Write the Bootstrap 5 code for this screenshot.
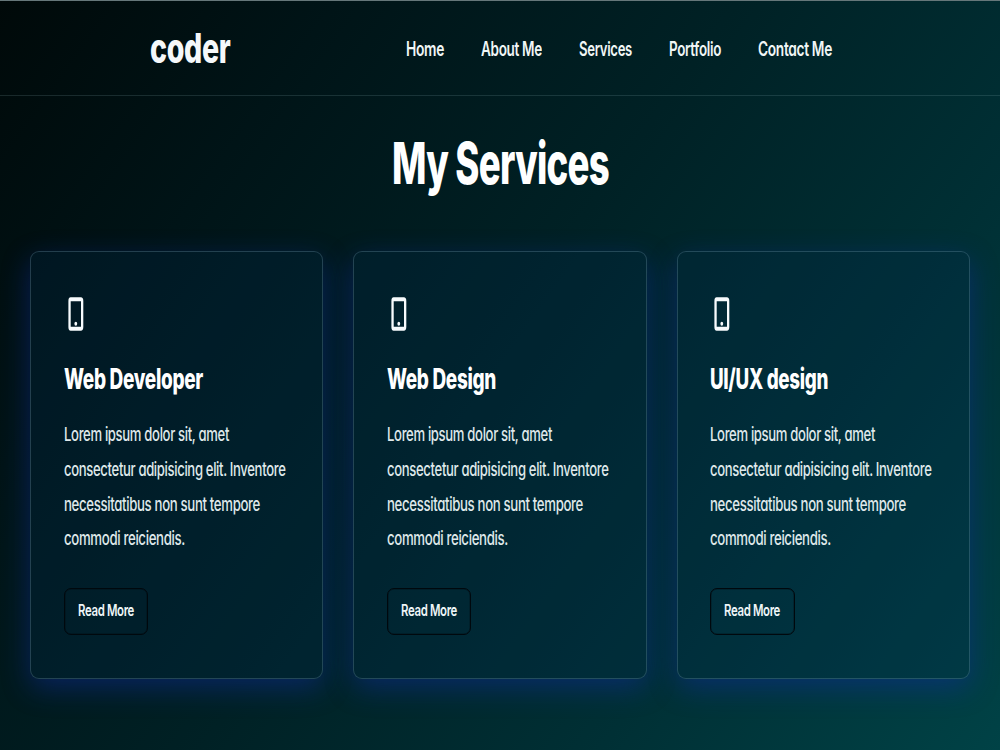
<!DOCTYPE html>
<html lang="en">
<head>
<meta charset="utf-8">
<meta name="viewport" content="width=device-width, initial-scale=1">
<title>coder - My Services</title>
<link href="https://cdn.jsdelivr.net/npm/bootstrap@5.3.0/dist/css/bootstrap.min.css" rel="stylesheet">
<style>
  body {
    height: 750px; overflow: hidden; color: #fff;
    font-family: Inter, "Open Sans", sans-serif;
    font-feature-settings: "cv11" 1;
    letter-spacing: -.03em;
    background: linear-gradient(125.7deg, #000909 0%, #001417 22%, #002125 48%, #003035 74%, #004246 100%);
  }
  .site-header { height: 96px; border-top: 1px solid #66777a; border-bottom: 1px solid rgba(150,190,195,.17); padding-left: 150px; }
  /* condensed lettering: every line is set to the width in data-w */
  .fit { display: block; white-space: nowrap; flex: none; }
  .fit > span { display: inline-block; transform-origin: 0 50%; }
  .brand { font-size: 41px; font-weight: 800; line-height: 48px; width: 256px; color: #f5f8fa; text-decoration: none; }
  .menu { gap: 37px; padding-top: 2px; }
  .menu a { font-size: 20px; font-weight: 600; line-height: 30px; color: #f0f6f6; text-decoration: none; }
  .page-title { font-size: 58px; font-weight: 800; line-height: 60px; margin: 37px 0 58px; letter-spacing: -.02em; }
  .services { gap: 30px; padding: 0 30px; }
  .service {
    flex: 1 1 0; height: 428px; padding: 45px 32.5px 0; border: 1px solid rgba(140,180,205,.25); border-radius: 9px;
    background: rgba(0,44,76,.26); box-shadow: 0 9px 28px rgba(16,44,160,.48);
  }
  .phone { display: block; margin-left: 4px; width: 16px; height: 34px; }
  .service h2 { font-size: 28px; font-weight: 800; line-height: 34px; margin: 31px 0 21px; }
  .service p { font-size: 18.6px; font-weight: 500; line-height: 34.8px; margin: 0 0 31.5px; color: #dfe8ea; }
  .btn-more {
    width: 84.5px; height: 47px; padding: 0 0 0 13px; border: 1px solid #00080d; border-radius: 7px;
    box-shadow: inset 0 0 0 .5px rgba(0,8,13,.5);
    font-size: 16.4px; font-weight: 600; color: #eef5f7; line-height: 43px; text-align: left; letter-spacing: -.03em;
  }
  .btn-more .fit { margin-top: -1px; }
</style>
</head>
<body>
<header class="site-header d-flex align-items-center">
  <a href="#" class="brand"><span class="fit" data-w="80.5"><span>coder</span></span></a>
  <nav class="menu d-flex">
    <a href="#" class="fit" data-w="38"><span>Home</span></a>
    <a href="#" class="fit" data-w="61"><span>About Me</span></a>
    <a href="#" class="fit" data-w="53"><span>Services</span></a>
    <a href="#" class="fit" data-w="52"><span>Portfolio</span></a>
    <a href="#" class="fit" data-w="74"><span>Contact Me</span></a>
  </nav>
</header>
<main>
  <h1 class="page-title d-flex justify-content-center"><span class="fit" data-w="217"><span>My Services</span></span></h1>
  <section class="services d-flex" id="services"></section>
</main>
<script>
  const lines = [["Lorem ipsum dolor sit, amet", 165], ["consectetur adipisicing elit. Inventore", 221.5],
                 ["necessitatibus non sunt tempore", 196], ["commodi reiciendis.", 121]];
  const fit = (t, w) => `<span class="fit" data-w="${w}"><span>${t}</span></span>`;
  document.getElementById("services").innerHTML =
    [["Web Developer", 139], ["Web Design", 109], ["UI/UX design", 118]].map(([t, w]) => `
    <article class="service">
      <svg class="phone" viewBox="0 0 16 34" aria-hidden="true">
        <path fill="#f7fbfd" fill-rule="evenodd" d="M2.6 .3H12.8Q15.3 .3 15.3 4V30Q15.3 33.7 12.8 33.7H2.6Q.4 33.7 .4 30V4Q.4 .3 2.6 .3ZM2.7 4.2V29.8H13V4.2Z"/>
        <ellipse cx="7.8" cy="26.8" rx="1.4" ry="2" fill="#f7fbfd"/>
      </svg>
      <h2>${fit(t, w)}</h2>
      <p>${lines.map(l => fit(l[0], l[1])).join("")}</p>
      <button type="button" class="btn btn-more">${fit("Read More", 56)}</button>
    </article>`).join("");
  document.querySelectorAll(".fit").forEach(el => {
    const s = el.firstElementChild, w = +el.dataset.w;
    const k = w / s.getBoundingClientRect().width;
    el.style.width = w + "px";
    s.style.transform = `scaleX(${k})`;
  });
</script>
<script src="https://cdn.jsdelivr.net/npm/bootstrap@5.3.0/dist/js/bootstrap.bundle.min.js"></script>
</body>
</html>
